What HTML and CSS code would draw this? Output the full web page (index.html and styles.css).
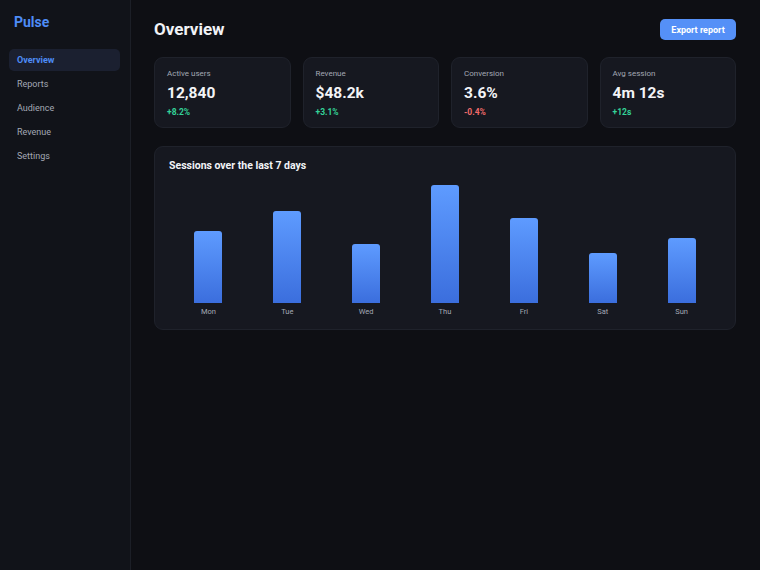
FILE: index.html
```html
<!DOCTYPE html>
<html lang="en">
<head>
<meta charset="utf-8">
<title>Pulse — Overview</title>
<link rel="stylesheet" href="styles.css">
</head>
<body>
<div class="app">
  <aside class="sidebar">
    <div class="logo">Pulse</div>
    <nav class="nav">
      <a class="nav-item active" href="#">Overview</a>
      <a class="nav-item" href="#">Reports</a>
      <a class="nav-item" href="#">Audience</a>
      <a class="nav-item" href="#">Revenue</a>
      <a class="nav-item" href="#">Settings</a>
    </nav>
  </aside>

  <main class="main">
    <header class="header">
      <h1 class="title">Overview</h1>
      <button class="btn-primary" type="button">Export report</button>
    </header>

    <section class="stats">
      <div class="card stat">
        <div class="stat-label">Active users</div>
        <div class="stat-value">12,840</div>
        <div class="stat-delta up">+8.2%</div>
      </div>
      <div class="card stat">
        <div class="stat-label">Revenue</div>
        <div class="stat-value">$48.2k</div>
        <div class="stat-delta up">+3.1%</div>
      </div>
      <div class="card stat">
        <div class="stat-label">Conversion</div>
        <div class="stat-value">3.6%</div>
        <div class="stat-delta down">-0.4%</div>
      </div>
      <div class="card stat">
        <div class="stat-label">Avg session</div>
        <div class="stat-value">4m 12s</div>
        <div class="stat-delta up">+12s</div>
      </div>
    </section>

    <section class="card chart-card">
      <h2 class="chart-title">Sessions over the last 7 days</h2>
      <div class="chart">
        <div class="col"><div class="bar-wrap"><div class="bar" style="height:72px"></div></div><span class="day">Mon</span></div>
        <div class="col"><div class="bar-wrap"><div class="bar" style="height:92px"></div></div><span class="day">Tue</span></div>
        <div class="col"><div class="bar-wrap"><div class="bar" style="height:59px"></div></div><span class="day">Wed</span></div>
        <div class="col"><div class="bar-wrap"><div class="bar" style="height:118px"></div></div><span class="day">Thu</span></div>
        <div class="col"><div class="bar-wrap"><div class="bar" style="height:85px"></div></div><span class="day">Fri</span></div>
        <div class="col"><div class="bar-wrap"><div class="bar" style="height:50px"></div></div><span class="day">Sat</span></div>
        <div class="col"><div class="bar-wrap"><div class="bar" style="height:65px"></div></div><span class="day">Sun</span></div>
      </div>
    </section>
  </main>
</div>
</body>
</html>
```

FILE: styles.css
```css
* {
  box-sizing: border-box;
}

html, body {
  margin: 0;
  height: 100%;
}

body {
  background: #0e0f14;
  color: #e8eaef;
  font-family: Roboto, "Liberation Sans", Arial, sans-serif;
}

.app {
  display: flex;
  min-height: 100vh;
}

/* Sidebar */
.sidebar {
  width: 131px;
  flex-shrink: 0;
  background: #111319;
  border-right: 1px solid #1c1f27;
  padding: 14px 10px 0 9px;
}

.logo {
  padding-left: 5px;
  font-size: 14px;
  line-height: 17px;
  font-weight: 700;
  color: #4e8cf6;
}

.nav {
  margin-top: 18px;
  display: flex;
  flex-direction: column;
  gap: 2px;
}

.nav-item {
  display: block;
  padding: 5px 8px;
  font-size: 9px;
  line-height: 12px;
  color: #a3a8b4;
  text-decoration: none;
  border-radius: 5px;
}

.nav-item.active {
  background: #1b2030;
  color: #4e8cf6;
  font-weight: 700;
}

/* Main */
.main {
  flex: 1;
  padding: 19px 24px 0 23px;
}

.header {
  display: flex;
  align-items: center;
  justify-content: space-between;
  height: 21px;
}

.title {
  margin: 0;
  font-size: 17px;
  line-height: 21px;
  font-weight: 700;
  color: #f1f3f7;
}

.btn-primary {
  height: 21px;
  width: 76px;
  padding: 0;
  border: 0;
  border-radius: 5px;
  background: #5590f7;
  color: #ffffff;
  font-family: inherit;
  font-size: 9px;
  font-weight: 700;
}

.card {
  background: #161820;
  border: 1px solid #1f222b;
  border-radius: 9px;
}

/* Stat cards */
.stats {
  margin-top: 17px;
  display: grid;
  grid-template-columns: repeat(4, 1fr);
  gap: 12px;
}

.stat {
  padding: 11px 12px 10px 12px;
}

.stat-label {
  font-size: 8px;
  line-height: 10px;
  color: #a3a8b4;
}

.stat-value {
  margin-top: 5px;
  font-size: 15.5px;
  line-height: 18px;
  font-weight: 700;
  color: #f3f4f7;
}

.stat-delta {
  margin-top: 5px;
  font-size: 8.5px;
  line-height: 10px;
  font-weight: 700;
}

.stat-delta.up {
  color: #34d399;
}

.stat-delta.down {
  color: #f06a6a;
}

/* Chart */
.chart-card {
  margin-top: 18px;
  padding: 12px 14px 13px 14px;
}

.chart-title {
  margin: 0;
  font-size: 10.5px;
  line-height: 13px;
  font-weight: 700;
  color: #f1f3f7;
}

.chart {
  display: grid;
  grid-template-columns: repeat(7, 1fr);
}

.col {
  display: flex;
  flex-direction: column;
  align-items: center;
}

.bar-wrap {
  height: 131px;
  display: flex;
  align-items: flex-end;
}

.bar {
  width: 28px;
  border-radius: 3px 3px 0 0;
  background: linear-gradient(180deg, #5e9bff 0%, #3b6edd 100%);
}

.day {
  margin-top: 4px;
  font-size: 7.5px;
  line-height: 9px;
  color: #a3a8b4;
}
```
